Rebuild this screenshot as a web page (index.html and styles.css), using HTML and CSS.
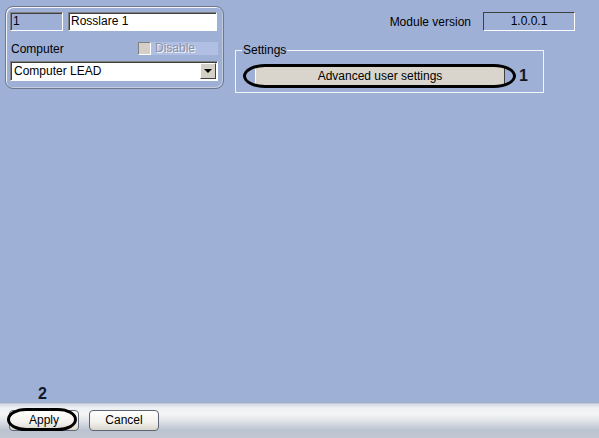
FILE: index.html
```html
<!DOCTYPE html>
<html lang="en">
<head>
    <meta charset="UTF-8">
    <title>Rosslare 1</title>
    <link rel="stylesheet" href="styles.css">
</head>
<body>
    <div class="window">
        <div class="top">
            <div class="panel">
                <div class="row">
                    <div class="field id">1</div>
                    <div class="field name">Rosslare 1</div>
                </div>
                <div class="row mid">
                    <span class="label">Computer</span>
                    <span class="check"></span>
                    <span class="disable">Disable</span>
                </div>
                <div class="combo">
                    <span>Computer LEAD</span>
                    <span class="drop"></span>
                </div>
            </div>
            <div class="side">
                <div class="version-row">
                    <span>Module version</span>
                    <div class="version">1.0.0.1</div>
                </div>
                <fieldset class="settings">
                    <legend>Settings</legend>
                    <div class="mark-row">
                        <span class="mark wide"><button type="button" class="btn-flat">Advanced user settings</button></span>
                        <b class="num">1</b>
                    </div>
                </fieldset>
            </div>
        </div>
        <div class="bottom">
            <b class="num two">2</b>
            <span class="mark small"><button type="button" class="btn">Apply</button></span>
            <button type="button" class="btn">Cancel</button>
        </div>
    </div>
</body>
</html>
```

FILE: styles.css
```css
body{
    margin: 0;
    background-color: #9fb0d7;
    font-family: "Liberation Sans", Arial, sans-serif;
    font-size: 12px;
    color: #000;
}
.window{
    width: 599px;
    height: 438px;
    display: flex;
    flex-direction: column;
}
.top{
    flex: 1;
    display: flex;
    align-items: flex-start;
}
.panel{
    margin: 6px 0 0 5px;
    width: 208px;
    padding: 5px 5px 7px 4px;
    border: 1px solid #6e778b;
    border-radius: 8px;
    box-shadow: inset 1px 1px 0 #f2f4f9, inset -1px -1px 0 #c4cbdb;
}
.row{
    display: flex;
    align-items: center;
}
.field{
    height: 17px;
    line-height: 17px;
    padding-left: 2px;
    border: 1px solid #fff;
    border-top-color: #808080;
    border-left-color: #808080;
    box-shadow: inset 1px 1px 0 #404040;
}
.id{
    width: 49px;
    background-color: #9fb0d7;
}
.name{
    width: 145px;
    margin-left: 5px;
    background-color: #fff;
}
.mid{
    margin-top: 11px;
    height: 13px;
}
.label{
    flex: 1;
    padding-left: 1px;
}
.check{
    width: 11px;
    height: 11px;
    background-color: #d4d0c8;
    border: 1px solid #fff;
    border-top-color: #808080;
    border-left-color: #808080;
}
.disable{
    width: 63px;
    height: 13px;
    line-height: 13px;
    padding-left: 4px;
    background-color: #b0bfe2;
    color: #8a93aa;
    text-shadow: 1px 1px 0 #f4f6fb;
}
.combo{
    margin-top: 6px;
    height: 18px;
    display: flex;
    align-items: center;
    justify-content: space-between;
    padding-left: 3px;
    background-color: #fff;
    border: 1px solid #fff;
    border-top-color: #808080;
    border-left-color: #808080;
    box-shadow: inset 1px 1px 0 #404040;
}
.drop{
    width: 16px;
    height: 16px;
    margin-right: 1px;
    background-color: #d4d0c8;
    border: 1px solid #404040;
    border-top-color: #fff;
    border-left-color: #fff;
    box-sizing: border-box;
    position: relative;
}
.drop::after{
    content: "";
    position: absolute;
    left: 3px;
    top: 5px;
    border-left: 4px solid transparent;
    border-right: 4px solid transparent;
    border-top: 4px solid #000;
}
.side{
    margin-left: 11px;
    padding-top: 12px;
    flex: 1;
}
.version-row{
    display: flex;
    justify-content: flex-end;
    align-items: center;
    gap: 12px;
    margin-right: 24px;
}
.version{
    width: 90px;
    height: 17px;
    line-height: 17px;
    text-align: center;
    border: 1px solid #fff;
    border-top-color: #404040;
    border-left-color: #404040;
}
.settings{
    margin: 12px 0 0;
    width: 307px;
    height: 48px;
    padding: 0;
    border: 1px solid #f2f4f8;
}
.settings legend{
    margin-left: 6px;
    padding: 0 1px;
}
.mark-row{
    display: flex;
    align-items: center;
    padding: 9px 0 0 19px;
}
.mark{
    position: relative;
    display: inline-block;
}
.mark::after{
    content: "";
    position: absolute;
    border: 3px solid #000;
}
.wide::after{
    left: -12px;
    top: -2px;
    width: 267px;
    height: 18px;
    border-radius: 22px / 12px;
}
.small::after{
    left: -2px;
    top: -2px;
    width: 64px;
    height: 17px;
    border-radius: 20px / 12px;
}
.btn-flat{
    width: 250px;
    height: 20px;
    padding: 0;
    font: inherit;
    background-color: #d9d5cd;
    border: 1px solid #404040;
    border-top-color: #fff;
    border-left-color: #fff;
}
.num{
    font-size: 16px;
    margin-left: 14px;
    color: #101828;
}
.bottom{
    position: relative;
    height: 36px;
    display: flex;
    align-items: center;
    gap: 10px;
    padding-left: 9px;
    background: linear-gradient(to bottom, #8d9dbd 0, #d5dae3 2px, #eef0f2 6px, #f5f5f5 12px, #e3e5ea 18px, #bcc3d0 28px, #c2c8d4 36px);
}
.btn{
    width: 70px;
    height: 21px;
    padding: 0;
    font: inherit;
    border: 1px solid #5d6474;
    border-radius: 4px;
    background: linear-gradient(to bottom, #ffffff, #f2f1ec 60%, #d8d5cc);
}
.two{
    position: absolute;
    left: 38px;
    top: -17px;
    margin: 0;
}
```
